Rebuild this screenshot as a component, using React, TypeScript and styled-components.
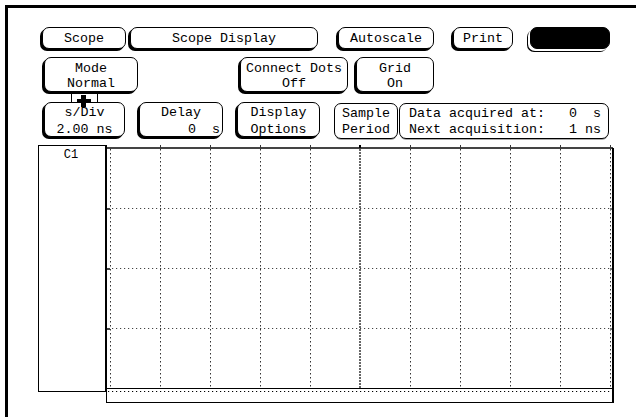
import React from 'react';
import styled, { createGlobalStyle } from 'styled-components';

const Global = createGlobalStyle`
  html, body { margin: 0; padding: 0; background: #fff; }
  body { font-family: "Liberation Mono", "DejaVu Sans Mono", monospace; color: #000; }
`;

const Screen = styled.div`
  width: 636px;
  height: 417px;
  box-sizing: border-box;
  padding: 5px 0 0 5px;
  background: #fff;
  overflow: hidden;
`;

const Frame = styled.div`
  box-sizing: border-box;
  height: 100%;
  border-top: 3px solid #000;
  border-left: 3px solid #000;
  display: flex;
  flex-direction: column;
`;

const Row = styled.div<{ $mt: number; $h: number }>`
  display: flex;
  align-items: flex-start;
  margin-top: ${(p) => p.$mt}px;
  height: ${(p) => p.$h}px;
`;

const Btn = styled.div<{ $w: number; $ml: number; $h: number; $dark?: boolean; $lh?: number; $pt?: number }>`
  position: relative;
  box-sizing: border-box;
  flex: none;
  width: ${(p) => p.$w}px;
  height: ${(p) => p.$h}px;
  margin-left: ${(p) => p.$ml}px;
  padding-top: ${(p) => p.$pt ?? 0}px;
  border: 1px solid #000;
  border-radius: 7px;
  background: ${(p) => (p.$dark ? '#000' : '#fff')};
  box-shadow: ${(p) => (p.$dark ? '-2px 2px 0 #fff, -3px 3px 0 #000' : '-2px 2px 0 #000')};
  display: flex;
  flex-direction: column;
  justify-content: center;
  font-size: 13.33px;
  line-height: ${(p) => p.$lh ?? 15}px;
`;

const Field = styled.div<{ $w: number; $ml: number }>`
  box-sizing: border-box;
  flex: none;
  width: ${(p) => p.$w}px;
  height: 36px;
  margin-top: 1px;
  margin-left: ${(p) => p.$ml}px;
  padding-top: 1px;
  border: 1px solid #000;
  border-radius: 7px;
  background: #fff;
  box-shadow: 0 2px 0 -1px #aaa;
  display: flex;
  flex-direction: column;
  justify-content: center;
  font-size: 13.33px;
  line-height: 16px;
`;

const Line = styled.span<{ $align?: 'left' | 'center' | 'right'; $pad?: number }>`
  display: block;
  white-space: pre;
  text-align: ${(p) => p.$align ?? 'center'};
  padding: 0 ${(p) => p.$pad ?? 0}px;
`;

const Connector = styled.svg`
  position: absolute;
  left: 23px;
  top: 34px;
  width: 32px;
  height: 18px;
  z-index: 2;
  overflow: visible;
`;

const ChartRow = styled.div`
  display: flex;
  align-items: flex-start;
  margin-top: 6px;
  margin-left: 30px;
`;

const LabelBox = styled.div`
  box-sizing: border-box;
  flex: none;
  width: 69px;
  height: 247px;
  border: 1px solid #000;
  border-right: 2px solid #000;
  text-align: center;
  font-size: 12px;
  line-height: 14px;
  padding-top: 2px;
  padding-right: 2px;
`;

const Chart = styled.svg`
  flex: none;
  display: block;
  margin-left: -1px;
`;

const cols = Array.from({ length: 11 }, (_, i) => 4 + i * 50);
const rows = [63, 123, 183];

function Grid() {
  return (
    <Chart width={508} height={258} viewBox="0 0 508 258">
      {cols.map((x, i) =>
        i === 5 ? null : (
          <line key={`v${i}`} x1={x + 0.5} y1={4} x2={x + 0.5} y2={243} stroke="#333" strokeWidth={1} strokeDasharray="1.5 2.5" />
        )
      )}
      <line x1={254} y1={4} x2={254} y2={243} stroke="#666" strokeWidth={2} strokeDasharray="2 1" />
      {rows.map((y) => (
        <line key={`h${y}`} x1={2} y1={y + 0.5} x2={506} y2={y + 0.5} stroke="#444" strokeWidth={1} strokeDasharray="1.2 2.8" />
      ))}
      <rect x={1} y={2} width={506} height={2} fill="#444" />
      {cols.slice(1).map((x) => (
        <rect key={`t${x}`} x={x} y={0} width={1} height={3} fill="#333" />
      ))}
      <rect x={253} y={0} width={2} height={3} fill="#000" />
      {rows.map((y) => (
        <rect key={`l${y}`} x={1} y={y} width={3} height={2} fill="#444" />
      ))}
      {rows.map((y) => (
        <rect key={`r${y}`} x={504} y={y} width={3} height={2} fill="#777" />
      ))}
      <rect x={506} y={3} width={2} height={255} fill="#000" />
      <rect x={0} y={243} width={508} height={1} fill="#000" />
      <line x1={2} y1={246.5} x2={506} y2={246.5} stroke="#000" strokeWidth={1} strokeDasharray="1.2 2.8" />
      <rect x={0} y={243} width={1} height={15} fill="#000" />
      <rect x={0} y={257} width={508} height={1} fill="#000" />
    </Chart>
  );
}

export default function App() {
  return (
    <>
      <Global />
      <Screen>
        <Frame>
          <Row $mt={19} $h={22}>
            <Btn $w={84} $ml={34} $h={22}><Line>Scope</Line></Btn>
            <Btn $w={188} $ml={4} $h={22}><Line>Scope Display</Line></Btn>
            <Btn $w={96} $ml={20} $h={22}><Line>Autoscale</Line></Btn>
            <Btn $w={60} $ml={19} $h={22}><Line>Print</Line></Btn>
            <Btn $w={80} $ml={17} $h={22} $dark />
          </Row>
          <Row $mt={8} $h={35}>
            <Btn $w={94} $ml={36} $h={35} $pt={2}>
              <Line>Mode</Line>
              <Line>Normal</Line>
              <Connector viewBox="0 0 32 18">
                <rect x={3} y={0} width={1} height={10} fill="#000" />
                <rect x={29} y={0} width={1} height={10} fill="#000" />
                <rect x={9} y={7} width={14} height={4} fill="#000" />
                <rect x={13} y={3} width={5} height={12} fill="#000" />
              </Connector>
            </Btn>
            <Btn $w={108} $ml={102} $h={35} $pt={2}>
              <Line>Connect Dots</Line>
              <Line>Off</Line>
            </Btn>
            <Btn $w={78} $ml={8} $h={35} $pt={2}>
              <Line>Grid</Line>
              <Line>On</Line>
            </Btn>
          </Row>
          <Row $mt={10} $h={37}>
            <Btn $w={81} $ml={36} $h={35} $lh={17} $pt={2}>
              <Line>s/Div</Line>
              <Line>2.00 ns</Line>
            </Btn>
            <Btn $w={84} $ml={14} $h={35} $lh={17} $pt={2}>
              <Line>Delay</Line>
              <Line $align="right" $pad={2}>0  s</Line>
            </Btn>
            <Btn $w={83} $ml={14} $h={35} $lh={17} $pt={2}>
              <Line>Display</Line>
              <Line>Options</Line>
            </Btn>
            <Field $w={64} $ml={14}>
              <Line>Sample</Line>
              <Line>Period</Line>
            </Field>
            <Field $w={210} $ml={1}>
              <Line $align="left" $pad={9}>Data acquired at:   0  s</Line>
              <Line $align="left" $pad={9}>Next acquisition:   1 ns</Line>
            </Field>
          </Row>
          <ChartRow>
            <LabelBox>C1</LabelBox>
            <Grid />
          </ChartRow>
        </Frame>
      </Screen>
    </>
  );
}
